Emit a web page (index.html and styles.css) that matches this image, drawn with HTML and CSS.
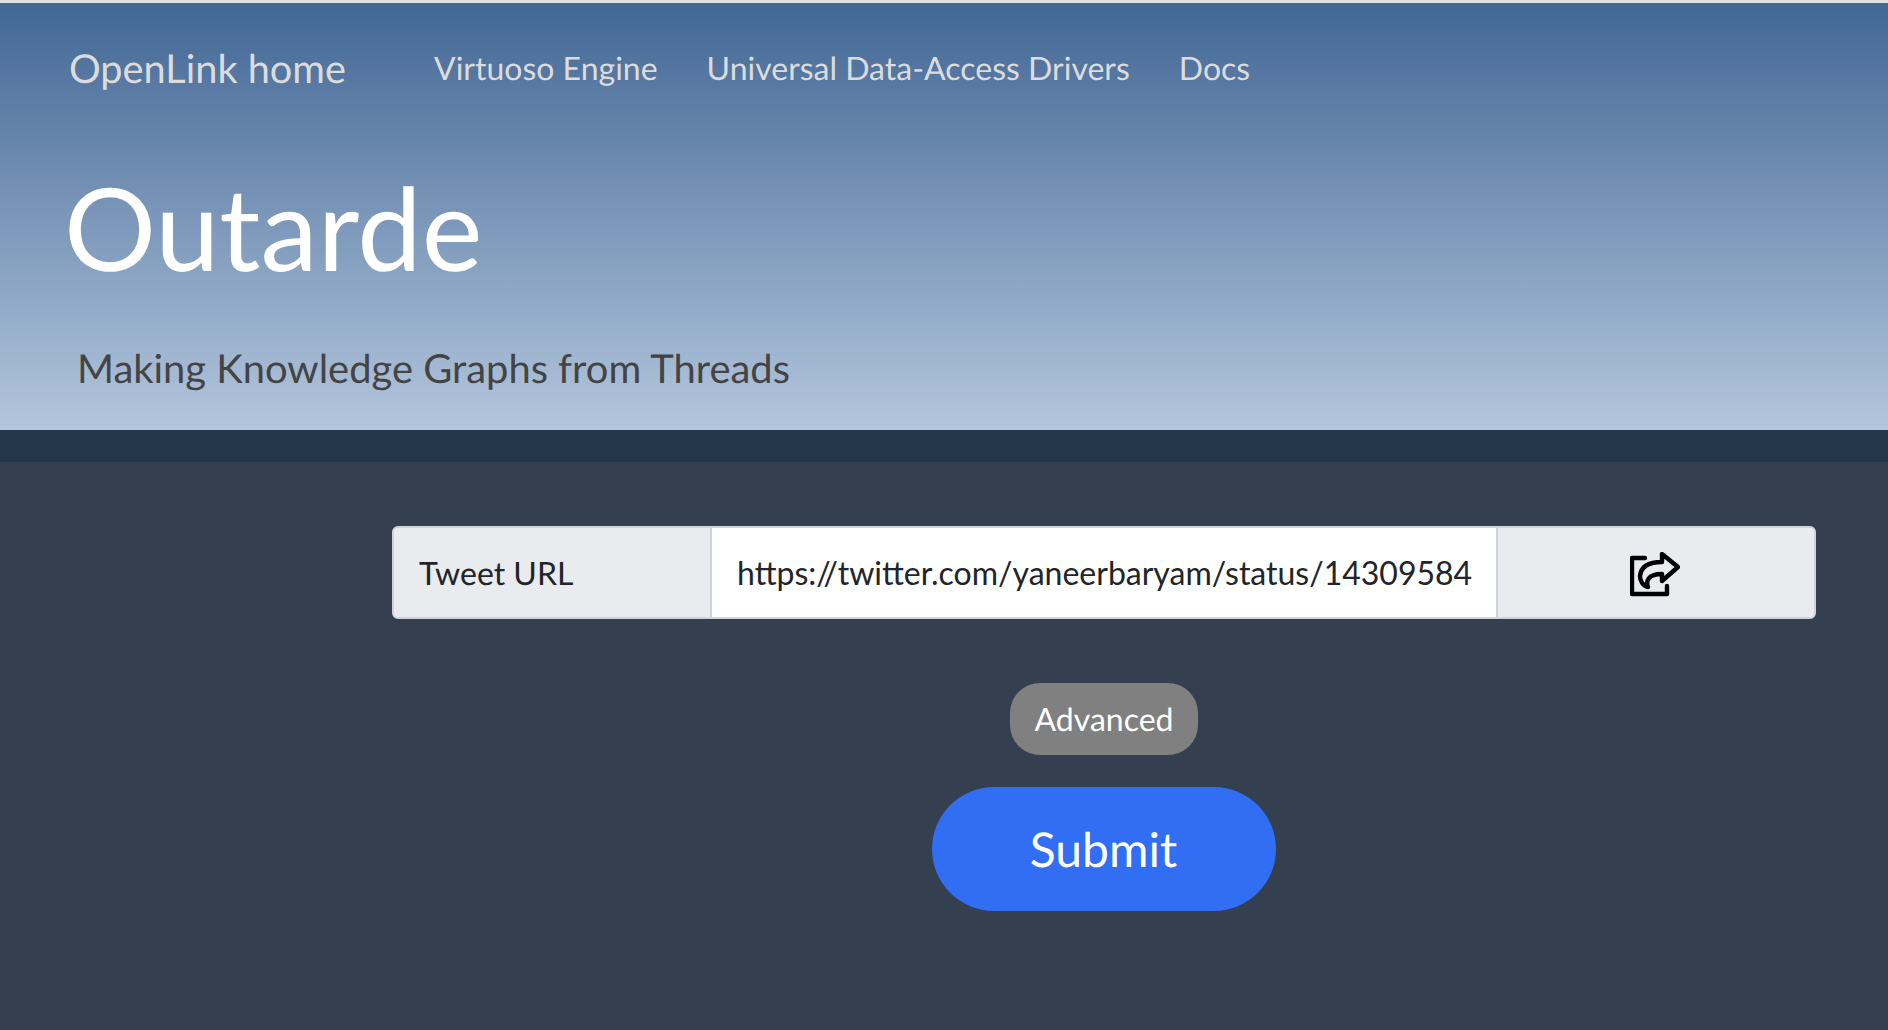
FILE: index.html
```html
<!DOCTYPE html>
<html lang="en">
<head>
<meta charset="utf-8">
<title>Outarde</title>
<link rel="stylesheet" href="styles.css">
</head>
<body>
<div class="topline"></div>
<header class="hero">
  <nav class="nav">
    <a class="brand" href="#">OpenLink home</a>
    <ul class="links">
      <li><a href="#">Virtuoso Engine</a></li>
      <li><a href="#">Universal Data-Access Drivers</a></li>
      <li><a href="#">Docs</a></li>
    </ul>
  </nav>
  <h1 class="title">Outarde</h1>
  <p class="tagline">Making Knowledge Graphs from Threads</p>
</header>
<div class="band"></div>
<main class="main">
  <div class="input-group">
    <span class="addon label">Tweet URL</span>
    <input class="url" type="text" value="https://twitter.com/yaneerbaryam/status/1430958445678923776">
    <span class="addon action">
      <svg class="share" viewBox="0 0 50 45" width="50" height="45" fill="none" stroke="#000" stroke-width="4.4" stroke-linecap="round" stroke-linejoin="round" aria-hidden="true">
        <path d="M15 6H2V42H37V34"/>
        <path d="M32 2V10C20 10 11 14 10 24C10 29 13 34 18 35C16 30 17 22 32 22V29L48 15Z"/>
      </svg>
    </span>
  </div>
  <button class="btn advanced" type="button">Advanced</button>
  <button class="btn submit" type="button">Submit</button>
</main>
</body>
</html>
```
FILE: styles.css
```css
* { box-sizing: border-box; }
html, body { margin: 0; height: 100%; }
body {
  display: flex;
  flex-direction: column;
  background: #343f4f;
  font-family: Lato, "Open Sans", sans-serif;
  text-rendering: geometricPrecision;
  overflow: hidden;
}
.topline { height: 3px; background: #dfe1e5; flex: none; }
.hero {
  flex: none;
  height: 427px;
  padding: 0 0 0 69px;
  background: linear-gradient(to bottom, #426795, #b4c6dd);
}
.nav { display: flex; align-items: center; height: 128px; }
.brand { font-size: 39.7px; color: #dcdcdc; text-decoration: none; margin-right: 88px; padding-top: 2px; }
.links { display: flex; gap: 49px; list-style: none; margin: 0; padding: 0; }
.links a { font-size: 32px; color: #dcdcdc; text-decoration: none; }
.title {
  margin: 35px 0 0 -5px;
  font-size: 115px;
  line-height: 122px;
  font-weight: 400;
  color: #fff;
}
.tagline {
  margin: 57px 0 0 8px;
  font-size: 39.9px;
  line-height: 48px;
  color: #444;
}
.band { flex: none; height: 32px; background: #25374b; }
.main {
  flex: 1;
  display: flex;
  flex-direction: column;
  align-items: center;
  padding: 64px 72px 0 392px;
}
.input-group {
  display: flex;
  width: 100%;
  height: 93px;
  border: 2px solid #ced4da;
  border-radius: 6px;
  overflow: hidden;
  background: #e9ebef;
}
.addon {
  flex: none;
  width: 316px;
  display: flex;
  align-items: center;
  background: #e9ebef;
  font-size: 32px;
  color: #212529;
}
.label { padding-left: 25px; }
.action { justify-content: center; padding: 4px 2px 0 0; }
.share { display: block; }
.url {
  flex: 1;
  min-width: 0;
  border: 0;
  border-left: 2px solid #ced4da;
  border-right: 2px solid #ced4da;
  padding: 0 24px 0 25px;
  background: #fff;
  font-family: inherit;
  font-size: 32px;
  color: #212529;
  outline: none;
}
.btn { border: 0; color: #fff; font-family: inherit; text-rendering: inherit; display: block; }
.advanced {
  margin-top: 64px;
  width: 188px;
  height: 72px;
  padding-bottom: 3px;
  border-radius: 30px;
  background: #808080;
  font-size: 32px;
}
.submit {
  margin-top: 32px;
  width: 344px;
  height: 124px;
  padding-right: 7px;
  border-radius: 62px;
  background: #316ef4;
  font-size: 48px;
}
```
